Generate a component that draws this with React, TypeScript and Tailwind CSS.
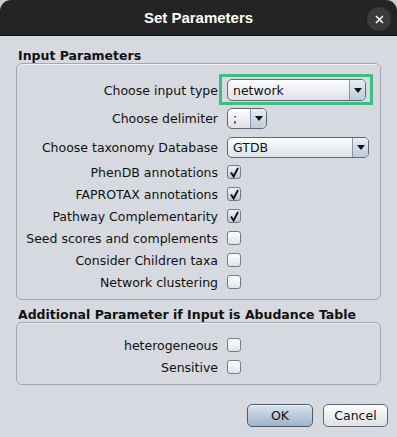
import React from "react";

const font = "font-['DejaVu_Sans',sans-serif] text-[12.5px] leading-[15px] text-[#111]";

function Check({ checked }: { checked?: boolean }) {
  return (
    <div
      className={`w-[14px] h-[14px] rounded-[3px] border border-[#737c88] flex items-center justify-center ${
        checked ? "bg-linear-to-b from-[#eef3f8] to-[#b9c8d9]" : "bg-linear-to-b from-[#ffffff] to-[#dfe3e9]"
      }`}
    >
      {checked && (
        <svg width="11" height="11" viewBox="0 0 11 11">
          <path d="M2 5.5 L4.6 9.5 L9 1" stroke="#111" strokeWidth="1.9" fill="none" />
        </svg>
      )}
    </div>
  );
}

function Combo({ value, className }: { value: string; className: string }) {
  return (
    <div
      className={`flex rounded-[5px] border border-[#5f6873] bg-linear-to-b from-[#fdfdfe] to-[#dde1e7] shadow-[inset_0_1px_0_#fff] ${className}`}
    >
      <div className="flex-1 flex items-center pl-[5px]">{value}</div>
      <div className="w-[16px] flex items-center justify-center border-l border-[#8c96a3] rounded-r-[4px] bg-linear-to-b from-[#e9eef4] to-[#bccadb]">
        <svg width="8" height="5" viewBox="0 0 8 5">
          <path d="M0 0 H8 L4 5 Z" fill="#111" />
        </svg>
      </div>
    </div>
  );
}

function Row({ label, children, className = "" }: { label: string; children: React.ReactNode; className?: string }) {
  return (
    <div className={`flex items-center ${className}`}>
      <div className="w-[201px] text-right whitespace-nowrap">{label}</div>
      <div className="ml-[9px] flex items-center">{children}</div>
    </div>
  );
}

export default function App() {
  return (
    <div className={`w-[397px] h-[437px] bg-[#c9cbd0] ${font}`}>
      <div className="w-full h-full flex flex-col bg-[#d6d9df] rounded-t-[11px] overflow-hidden">
        <div className="h-[36px] shrink-0 bg-[#242424] border-b border-[#111] flex items-center justify-center relative">
          <span className="font-['Liberation_Sans',sans-serif] font-bold text-[15px] text-white">Set Parameters</span>
          <div className="absolute right-[6px] top-[7px] w-[24px] h-[24px] rounded-full bg-[#3a3a3a] flex items-center justify-center">
            <svg width="9" height="9" viewBox="0 0 9 9">
              <path d="M1 1 L8 8 M8 1 L1 8" stroke="#fff" strokeWidth="1.6" />
            </svg>
          </div>
        </div>

        <div className="px-[16px]">
          <div className="mt-[12px] pl-[2px] font-bold">Input Parameters</div>
          <div className="rounded-[6px] border border-[#a3a8b0] shadow-[inset_0_1px_0_#eef0f3] pt-[15px] pb-[6px] flex flex-col">
            <Row label="Choose input type" className="h-[22px]">
              <div className="relative">
                <div className="absolute left-[-8px] right-[-7px] top-[-5px] bottom-[-4px] border-[3px] border-[#3ebd80]" />
                <Combo value="network" className="w-[139px] h-[22px]" />
              </div>
            </Row>
            <Row label="Choose delimiter" className="h-[21px] mt-[7px]">
              <Combo value=";" className="w-[40px] h-[21px]" />
            </Row>
            <Row label="Choose taxonomy Database" className="h-[21px] mt-[8px]">
              <Combo value="GTDB" className="w-[142px] h-[21px]" />
            </Row>
            <div className="mt-[3px] flex flex-col">
              <Row label="PhenDB annotations" className="h-[22px]">
                <Check checked />
              </Row>
              <Row label="FAPROTAX annotations" className="h-[22px]">
                <Check checked />
              </Row>
              <Row label="Pathway Complementarity" className="h-[22px]">
                <Check checked />
              </Row>
              <Row label="Seed scores and complements" className="h-[22px]">
                <Check />
              </Row>
              <Row label="Consider Children taxa" className="h-[22px]">
                <Check />
              </Row>
              <Row label="Network clustering" className="h-[22px]">
                <Check />
              </Row>
            </div>
          </div>

          <div className="mt-[7px] pl-[2px] font-bold">Additional Parameter if Input is Abudance Table</div>
          <div className="rounded-[6px] border border-[#a3a8b0] shadow-[inset_0_1px_0_#eef0f3] pt-[11px] pb-[6px] flex flex-col">
            <Row label="heterogeneous" className="h-[22px]">
              <Check />
            </Row>
            <Row label="Sensitive" className="h-[22px]">
              <Check />
            </Row>
          </div>

          <div className="mt-[19px] flex justify-end gap-[10px] pr-[-7px] mr-[-7px]">
            <button className="w-[66px] h-[23px] rounded-[5px] border border-[#4f5a68] bg-linear-to-b from-[#d9e3ee] to-[#9fb3c9] shadow-[inset_0_1px_0_#eef3f8]">
              OK
            </button>
            <button className="w-[65px] h-[23px] rounded-[5px] border border-[#5f6873] bg-linear-to-b from-[#fdfdfe] to-[#dde1e7]">
              Cancel
            </button>
          </div>
        </div>
      </div>
    </div>
  );
}
